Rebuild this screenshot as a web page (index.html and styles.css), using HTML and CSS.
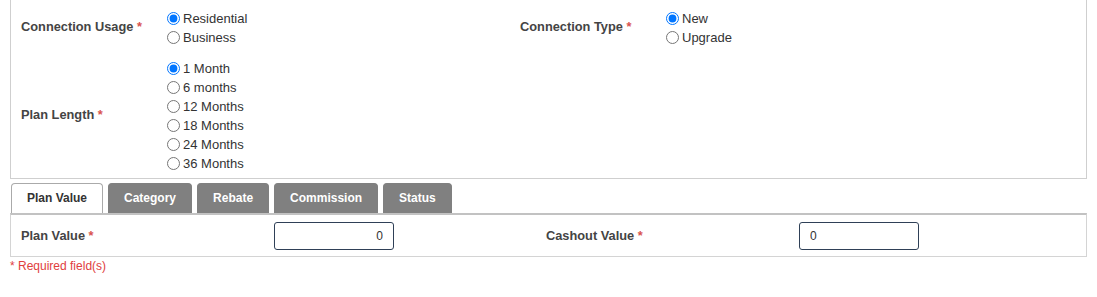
FILE: index.html
```html
<!DOCTYPE html>
<html lang="en">
<head>
<meta charset="utf-8">
<title>Connection form</title>
<link rel="stylesheet" href="styles.css">
</head>
<body>
<div class="page">
  <div class="panel">
    <div class="row">
      <div class="lbl">Connection Usage <span class="req">*</span></div>
      <div class="opts">
        <label class="opt"><input type="radio" name="usage" checked>Residential</label>
        <label class="opt"><input type="radio" name="usage">Business</label>
      </div>
      <div class="lbl">Connection Type <span class="req">*</span></div>
      <div class="opts">
        <label class="opt"><input type="radio" name="ctype" checked>New</label>
        <label class="opt"><input type="radio" name="ctype">Upgrade</label>
      </div>
    </div>
    <div class="row row2">
      <div class="lbl">Plan Length <span class="req">*</span></div>
      <div class="opts">
        <label class="opt"><input type="radio" name="plen" checked>1 Month</label>
        <label class="opt"><input type="radio" name="plen">6 months</label>
        <label class="opt"><input type="radio" name="plen">12 Months</label>
        <label class="opt"><input type="radio" name="plen">18 Months</label>
        <label class="opt"><input type="radio" name="plen">24 Months</label>
        <label class="opt"><input type="radio" name="plen">36 Months</label>
      </div>
    </div>
  </div>
  <div class="tabs">
    <div class="tab active">Plan Value</div>
    <div class="tab">Category</div>
    <div class="tab">Rebate</div>
    <div class="tab">Commission</div>
    <div class="tab">Status</div>
  </div>
  <div class="tabbody">
    <div class="vlbl">Plan Value <span class="req">*</span></div>
    <div class="vcell"><input class="num right" type="text" value="0"></div>
    <div class="vlbl">Cashout Value <span class="req">*</span></div>
    <div class="vcell"><input class="num" type="text" value="0"></div>
  </div>
  <div class="note">* Required field(s)</div>
</div>
</body>
</html>
```
FILE: styles.css
```css
html, body {
  margin: 0;
  padding: 0;
  background: #fff;
}
body {
  font-family: "Liberation Sans", Arial, sans-serif;
  font-size: 13px;
  color: #333;
}
.page {
  padding-left: 10px;
  width: 1077px;
}
.panel {
  border: 1px solid #cfcfcf;
  border-top: none;
  padding: 9px 0 5px 0;
}
.row {
  display: grid;
  grid-template-columns: 146px 353px 146px 1fr;
  align-items: center;
}
.row2 {
  margin-top: 12px;
}
.lbl {
  padding-left: 10px;
  padding-bottom: 3px;
  font-weight: bold;
  font-size: 12.8px;
  color: #444;
}
.req {
  color: #d9534f;
  font-weight: bold;
}
.opts {
  display: flex;
  flex-direction: column;
  padding-left: 5px;
}
.opt {
  display: flex;
  align-items: center;
  height: 19px;
  color: #333;
}
.opt input {
  width: 13px;
  height: 13px;
  margin: 0 3px 0 5px;
}
.tabs {
  display: flex;
  gap: 5px;
  margin-top: 4px;
  padding-left: 1px;
}
.tab {
  height: 29px;
  line-height: 29px;
  padding: 0 15px;
  background: #808080;
  color: #fff;
  font-weight: bold;
  font-size: 12px;
  border: 1px solid #808080;
  border-bottom: none;
  border-radius: 4px 4px 0 0;
}
.tab.active {
  background: #fff;
  color: #333;
  border-color: #aaa;
  padding: 0 15px;
}
.tabbody {
  display: grid;
  grid-template-columns: 253px 272px 253px 1fr;
  align-items: center;
  height: 41px;
  border: 1px solid #d4d4d4;
  border-top: 2px solid #c2c2c2;
}
.vlbl {
  padding-left: 10px;
  font-weight: bold;
  font-size: 12.8px;
  color: #444;
}
.vcell {
  padding-left: 10px;
}
.num {
  box-sizing: border-box;
  width: 120px;
  height: 28px;
  border: 1px solid #2f4057;
  border-radius: 3px;
  padding: 0 10px;
  font-family: "Liberation Sans", Arial, sans-serif;
  font-size: 12px;
  color: #333;
  outline: none;
}
.num.right {
  text-align: right;
}
.note {
  margin-top: 2px;
  font-size: 12px;
  color: #e0403e;
}
```
